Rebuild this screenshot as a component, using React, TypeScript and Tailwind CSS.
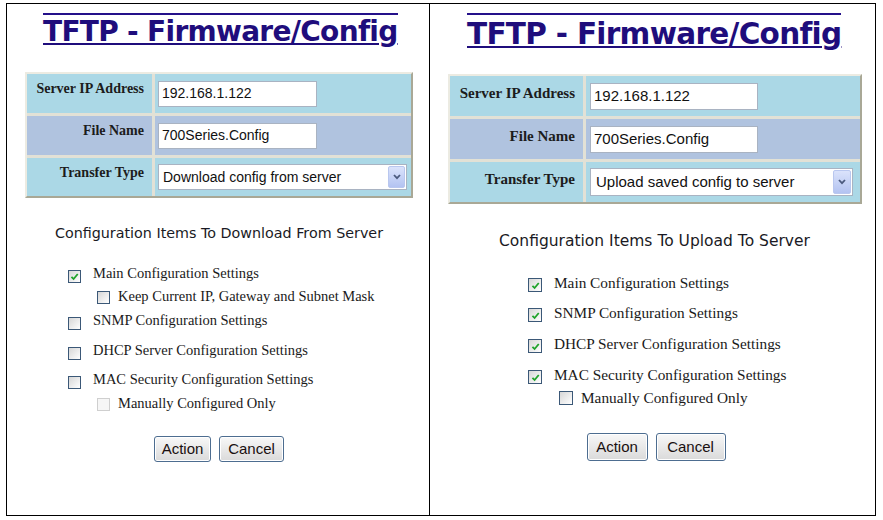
import React from 'react';

type Item = { label: string; checked: boolean; sub?: boolean; disabled?: boolean; mt: string };

const Check: React.FC<{ checked: boolean; disabled?: boolean; big: boolean }> = ({ checked, disabled, big }) => (
  <span
    className={`${big ? 'w-[14px] h-[14px]' : 'w-[13px] h-[13px]'} shrink-0 inline-flex items-center justify-center border ${
      disabled
        ? 'border-[#cfcfcf] bg-[#f6f6f6]'
        : 'border-[#3b5877] bg-linear-to-br from-[#d6d6d6] to-[#ffffff]'
    }`}
  >
    {checked && (
      <svg viewBox="0 0 10 10" className="w-[9px] h-[9px]">
        <path d="M1.6 5.3 L4 7.8 L8.6 2.2" stroke="#1fa32a" strokeWidth="2" fill="none" />
      </svg>
    )}
  </span>
);

const SelectBox: React.FC<{ value: string; big: boolean }> = ({ value, big }) => (
  <div
    className={`${big ? 'w-[263px] h-[28px] text-[15px] pl-[5px]' : 'w-[249px] h-[26px] text-[14px] pl-[4px]'} bg-white border border-[#a9b3c2] flex items-center justify-between pr-[1px] font-['Liberation_Sans',Arial,sans-serif] text-[#111]`}
  >
    <span>{value}</span>
    <span
      className={`${big ? 'w-[18px] h-[24px]' : 'w-[17px] h-[22px]'} rounded-[2px] border border-[#b9c7ef] bg-linear-to-b from-[#dbe3fb] to-[#b3c3f1] flex items-center justify-center`}
    >
      <svg viewBox="0 0 8 6" className="w-[8px] h-[6px]">
        <path d="M1 1 L4 4.2 L7 1" stroke="#4b5a7e" strokeWidth="1.8" fill="none" />
      </svg>
    </span>
  </div>
);

const Panel: React.FC<{ big: boolean; transfer: string; subtitle: string; items: Item[] }> = ({
  big,
  transfer,
  subtitle,
  items,
}) => {
  const label = `flex justify-end pr-[8px] font-['Liberation_Serif','Times_New_Roman',serif] font-bold text-[#1c1c1c] leading-[16px] whitespace-nowrap ${
    big ? 'text-[15px] pt-[9px]' : 'text-[14px] pt-[7px]'
  }`;
  const valueCell = `flex items-center ${big ? 'pl-[4px]' : 'pl-[3px]'}`;
  const input = `${big ? 'w-[168px] h-[27px] text-[15px]' : 'w-[159px] h-[26px] text-[14px]'} bg-white border border-[#a9b3c2] pl-[3px] flex items-center font-['Liberation_Sans',Arial,sans-serif] text-[#111]`;

  return (
    <div className="flex flex-col">
      {/* title */}
      <div
        className={`self-start border-t-2 border-[#24108a] text-[#1f0d7c] font-['DejaVu_Sans',Verdana,sans-serif] font-bold underline decoration-2 underline-offset-[2px] tracking-[-0.7px] whitespace-nowrap ${
          big ? 'ml-[37px] mt-[9px] pt-[4px] text-[29.5px] leading-[30px]' : 'ml-[36px] mt-[9px] pt-[3px] text-[28px] leading-[28px]'
        }`}
      >
        TFTP - Firmware/Config
      </div>

      {/* settings table */}
      <div
        className={`ml-[18px] self-start grid gap-[3px] bg-[#e2e1d6] border-2 border-t-[#ecebe2] border-l-[#ecebe2] border-r-[#a9a896] border-b-[#a9a896] ${
          big
            ? 'mt-[25px] grid-cols-[133px_274px] grid-rows-[40px_40px_40px]'
            : 'mt-[26px] grid-cols-[125px_256px] grid-rows-[39px_39px_38px]'
        }`}
      >
        <div className={`${label} bg-[#abd8e6]`}>Server IP Address</div>
        <div className={`${valueCell} bg-[#abd8e6]`}>
          <div className={input}>192.168.1.122</div>
        </div>
        <div className={`${label} bg-[#b0c3df]`}>File Name</div>
        <div className={`${valueCell} bg-[#b0c3df]`}>
          <div className={input}>700Series.Config</div>
        </div>
        <div className={`${label} bg-[#abd8e6]`}>Transfer Type</div>
        <div className={`${valueCell} bg-[#abd8e6]`}>
          <SelectBox value={transfer} big={big} />
        </div>
      </div>

      {/* subtitle */}
      <div
        className={`text-center h-[18px] leading-[18px] font-['DejaVu_Sans',Verdana,sans-serif] text-[#1a1a24] whitespace-nowrap ${
          big ? 'mt-[28px] text-[15.5px] pl-[4px]' : 'mt-[26px] text-[14.3px] pl-[2px]'
        }`}
      >
        {subtitle}
      </div>

      {/* items */}
      <div
        className={`flex flex-col font-['Liberation_Serif','Times_New_Roman',serif] text-[#1a1a1a] ${
          big ? 'mt-[21px] pl-[98px] text-[15.3px]' : 'mt-[20px] pl-[61px] text-[14.5px]'
        }`}
      >
        {items.map((it) => (
          <div
            key={it.label}
            className={`flex items-center h-[24px] ${it.mt} ${
              it.sub ? (big ? 'pl-[31px] gap-[8px]' : 'pl-[29px] gap-[8px]') : 'gap-[12px]'
            }`}
          >
            <span className={it.sub ? 'flex' : 'flex mt-[4px]'}>
              <Check checked={it.checked} disabled={it.disabled} big={big} />
            </span>
            <span className="whitespace-nowrap">{it.label}</span>
          </div>
        ))}
      </div>

      {/* buttons */}
      <div className={`flex justify-center gap-[8px] ${big ? 'mt-[23px] pl-[7px]' : 'mt-[20px] pl-[2px]'}`}>
        {['Action', 'Cancel'].map((b) => (
          <button
            key={b}
            className={`${
              big ? (b === 'Action' ? 'w-[61px] h-[28px]' : 'w-[70px] h-[28px]') : b === 'Action' ? 'w-[57px] h-[26px]' : 'w-[65px] h-[26px]'
            } rounded-[3px] border border-[#4d6d90] bg-linear-to-b from-[#f8f8f8] to-[#dadada] shadow-[inset_0_0_0_1px_#ffffff] text-[15px] font-['Liberation_Sans',Arial,sans-serif] text-[#1a1010] flex items-center justify-center`}
          >
            {b}
          </button>
        ))}
      </div>
    </div>
  );
};

export default function App() {
  const leftItems: Item[] = [
    { label: 'Main Configuration Settings', checked: true, mt: '' },
    { label: 'Keep Current IP, Gateway and Subnet Mask', checked: false, sub: true, mt: 'mt-[-1px]' },
    { label: 'SNMP Configuration Settings', checked: false, mt: '' },
    { label: 'DHCP Server Configuration Settings', checked: false, mt: 'mt-[6px]' },
    { label: 'MAC Security Configuration Settings', checked: false, mt: 'mt-[5px]' },
    { label: 'Manually Configured Only', checked: false, sub: true, disabled: true, mt: '' },
  ];
  const rightItems: Item[] = [
    { label: 'Main Configuration Settings', checked: true, mt: '' },
    { label: 'SNMP Configuration Settings', checked: true, mt: 'mt-[6px]' },
    { label: 'DHCP Server Configuration Settings', checked: true, mt: 'mt-[7px]' },
    { label: 'MAC Security Configuration Settings', checked: true, mt: 'mt-[7px]' },
    { label: 'Manually Configured Only', checked: false, sub: true, mt: 'mt-[-1px]' },
  ];

  return (
    <div className="w-[883px] h-[520px] bg-white pt-[3px] pl-[6px]">
      <div className="w-[870px] h-[513px] border border-black flex">
        <div className="w-[423px] border-r border-black">
          <Panel
            big={false}
            transfer="Download config from server"
            subtitle="Configuration Items To Download From Server"
            items={leftItems}
          />
        </div>
        <div className="flex-1">
          <Panel
            big={true}
            transfer="Upload saved config to server"
            subtitle="Configuration Items To Upload To Server"
            items={rightItems}
          />
        </div>
      </div>
    </div>
  );
}
